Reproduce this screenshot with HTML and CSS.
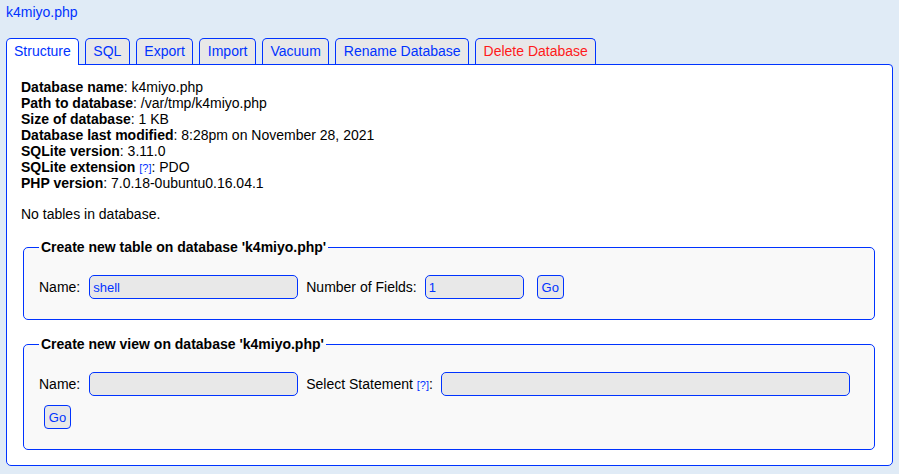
FILE: index.html
```html
<!DOCTYPE html>
<html>
<head>
<meta charset="utf-8">
<title>phpLiteAdmin</title>
<link rel="stylesheet" href="styles.css">
</head>
<body>
<a class="db-title" href="#">k4miyo.php</a>
<nav class="tabs">
  <a class="tab active" href="#">Structure</a>
  <a class="tab" href="#">SQL</a>
  <a class="tab" href="#">Export</a>
  <a class="tab" href="#">Import</a>
  <a class="tab" href="#">Vacuum</a>
  <a class="tab" href="#">Rename Database</a>
  <a class="tab danger" href="#">Delete Database</a>
</nav>
<main class="panel">
  <div class="info">
    <div><b>Database name</b>: k4miyo.php</div>
    <div><b>Path to database</b>: /var/tmp/k4miyo.php</div>
    <div><b>Size of database</b>: 1 KB</div>
    <div><b>Database last modified</b>: 8:28pm on November 28, 2021</div>
    <div><b>SQLite version</b>: 3.11.0</div>
    <div><b>SQLite extension</b> <a class="help" href="#">[?]</a>: PDO</div>
    <div><b>PHP version</b>: 7.0.18-0ubuntu0.16.04.1</div>
  </div>
  <p class="empty">No tables in database.</p>
  <fieldset class="box">
    <legend>Create new table on database 'k4miyo.php'</legend>
    <div class="row">
      <span class="label first">Name:</span>
      <input class="field name" type="text" value="shell">
      <span class="label">Number of Fields:</span>
      <input class="field num" type="text" value="1">
      <button class="go go-inline">Go</button>
    </div>
  </fieldset>
  <fieldset class="box second">
    <legend>Create new view on database 'k4miyo.php'</legend>
    <div class="row">
      <span class="label first">Name:</span>
      <input class="field name" type="text" value="">
      <span class="label">Select Statement <a class="help" href="#">[?]</a>:</span>
      <input class="field stmt" type="text" value="">
    </div>
    <div class="row row-btn">
      <button class="go">Go</button>
    </div>
  </fieldset>
</main>
</body>
</html>
```
FILE: styles.css
```css
html, body {
  margin: 0;
  padding: 0;
}
body {
  background: #e0ebf6;
  font-family: "Liberation Sans", Arial, sans-serif;
  font-size: 14px;
  line-height: 16px;
  color: #000;
  padding: 4px 6px 0 6px;
}
a {
  color: #0033ff;
  text-decoration: none;
}
.db-title {
  display: block;
  width: max-content;
  height: 16px;
}
.tabs {
  display: flex;
  gap: 6px;
  margin-top: 18px;
  align-items: flex-end;
}
.tab {
  display: block;
  background: #e8e8e8;
  border: 1px solid #0033ff;
  border-bottom: none;
  border-radius: 5px 5px 0 0;
  padding: 4px 7.5px 5px 7.5px;
  height: 16px;
  white-space: nowrap;
}
.tab.active {
  background: #fff;
  padding: 4px 7px 6px 7px;
  margin-bottom: -1px;
  position: relative;
  z-index: 1;
}
.tab.danger {
  color: #ff1a1a;
}
.panel {
  display: block;
  background: #fff;
  border: 1px solid #0033ff;
  border-radius: 0 4px 5px 5px;
  padding: 14px 15px 15px 14px;
}
.info div {
  height: 16px;
}
.help {
  font-size: 11px;
}
.empty {
  margin: 15px 0 17px 0;
}
.box {
  margin: 0 2px;
  background: #f9f9f9;
  border: 1px solid #0033ff;
  border-radius: 5px;
  padding: 20px 15px 20px 15px;
}
.box legend {
  font-weight: bold;
  padding: 0 2px;
  margin-left: 0;
  line-height: 16px;
}
.box.second {
  margin-top: 16px;
}
.row {
  display: flex;
  align-items: center;
  height: 24px;
}
.row-btn {
  margin-top: 9px;
}
.label {
  margin-right: 8px;
  white-space: nowrap;
}
.label.first {
  margin-right: 9px;
}
.field {
  box-sizing: border-box;
  height: 24px;
  background: #e8e8e8;
  border: 1px solid #0033ff;
  border-radius: 5px;
  padding: 0 3px;
  font-family: "Liberation Sans", Arial, sans-serif;
  font-size: 13px;
  color: #0033ff;
  margin: 0 8px 0 0;
  outline: none;
}
.field.name { width: 209px; }
.field.num { width: 99px; margin-right: 13px; }
.field.stmt { width: 409px; margin-right: 0; }
.go {
  box-sizing: border-box;
  height: 24px;
  width: 27px;
  padding: 0;
  background: #e8e8e8;
  border: 1px solid #0033ff;
  border-radius: 4px;
  color: #0033ff;
  font-family: "Liberation Sans", Arial, sans-serif;
  font-size: 13px;
  margin-left: 5px;
}
.go.go-inline {
  margin-left: 0;
}
```
